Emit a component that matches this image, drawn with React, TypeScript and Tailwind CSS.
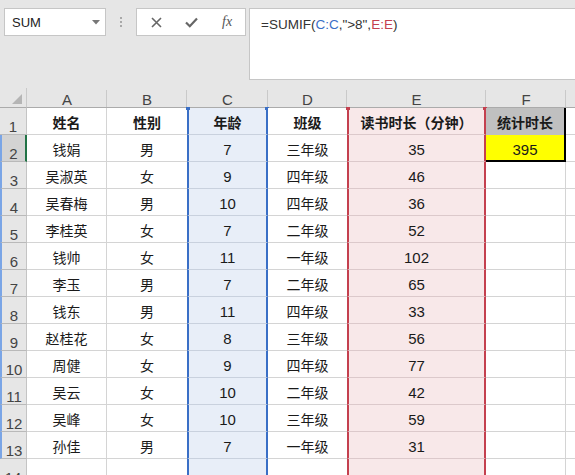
import React from "react";

type Row = [string, string, string, string, string];

const data: Row[] = [
  ["钱娟", "男", "7", "三年级", "35"],
  ["吴淑英", "女", "9", "四年级", "46"],
  ["吴春梅", "男", "10", "四年级", "36"],
  ["李桂英", "女", "7", "二年级", "52"],
  ["钱帅", "女", "11", "一年级", "102"],
  ["李玉", "男", "7", "二年级", "65"],
  ["钱东", "男", "11", "四年级", "33"],
  ["赵桂花", "女", "8", "三年级", "56"],
  ["周健", "女", "9", "四年级", "77"],
  ["吴云", "女", "10", "二年级", "42"],
  ["吴峰", "女", "10", "三年级", "59"],
  ["孙佳", "男", "7", "一年级", "31"],
];

const font = "font-['Liberation_Sans','Noto_Sans_CJK_SC',sans-serif]";

function RowHeader({ n }: { n: number }) {
  const sel = n === 2;
  const blue = n >= 2 && n <= 13;
  return (
    <div
      className={`flex items-end justify-center border-b border-b-[#b9b9b9] text-[15px] leading-none text-[#444] ${
        sel
          ? "bg-[#d3d3d3] border-r-2 border-r-[#217346]"
          : "bg-[#e6e6e6] border-r border-r-[#c4c4c4]"
      } ${blue ? "border-l-2 border-l-[#7aa5e6]" : ""}`}
    >
      <span className="mb-0">{n}</span>
    </div>
  );
}

function Cell({
  children,
  kind,
  bold,
  num,
}: {
  children?: React.ReactNode;
  kind: "n" | "c" | "e" | "f1" | "f2" | "g" | "b";
  bold?: boolean;
  num?: boolean;
}) {
  let cls = "";
  switch (kind) {
    case "n":
      cls = "bg-white border-r border-b border-[#d4d4d4]";
      break;
    case "b":
      cls = "bg-white border-b border-[#d4d4d4]";
      break;
    case "c":
      cls =
        "bg-[#e8eef8] border-l-2 border-r-2 border-l-[#3a6fc6] border-r-[#3a6fc6] border-b border-b-[#c9d1de]";
      break;
    case "e":
      cls =
        "bg-[#f8e8e9] border-l-2 border-r-2 border-l-[#c4404f] border-r-[#c4404f] border-b border-b-[#dcc9cb]";
      break;
    case "f1":
      cls = "bg-[#c0c0c0] border-r-2 border-r-black";
      break;
    case "f2":
      cls = "bg-[#ffff00] border-r-2 border-b-2 border-black";
      break;
    case "g":
      cls = "bg-white border-b border-[#d4d4d4]";
      break;
  }
  return (
    <div
      className={`relative flex items-center justify-center pt-[3px] leading-none text-[#1a1a1a] ${
        num ? "text-[15px]" : "text-[14px]"
      } ${bold ? "font-bold" : ""} ${cls}`}
    >
      {children}
    </div>
  );
}

function ColHeader({ label, last }: { label: string; last?: boolean }) {
  return (
    <div className="flex items-center justify-center bg-[#e6e6e6] border-b border-b-[#ababab] relative text-[15px] leading-none text-[#444]">
      <span className="mt-[4px]">{label}</span>
      {!last && (
        <div className="absolute right-0 top-[2px] bottom-0 w-px bg-[#c9c9c9]" />
      )}
    </div>
  );
}

export default function App() {
  return (
    <div className={`w-[575px] h-[475px] overflow-hidden bg-white ${font}`}>
      {/* formula bar */}
      <div className="h-[88px] bg-[#e6e6e6] flex items-start pt-2">
        <div className="ml-1 w-[102px] h-[28px] bg-white border border-[#c6c6c6] flex items-center justify-between pl-[7px] pr-[5px]">
          <span className="text-[13px] text-[#222] leading-none">SUM</span>
          <svg width="8" height="5" viewBox="0 0 8 5">
            <polygon points="0,0 8,0 4,4.5" fill="#777" />
          </svg>
        </div>
        <div className="w-[30px] h-[28px] flex flex-col items-center justify-center gap-[2px]">
          <div className="w-[2px] h-[2px] bg-[#a8a8a8]" />
          <div className="w-[2px] h-[2px] bg-[#a8a8a8]" />
          <div className="w-[2px] h-[2px] bg-[#a8a8a8]" />
        </div>
        <div className="w-[110px] h-[28px] bg-white border border-[#c6c6c6] flex items-center">
          <div className="w-[37px] flex justify-center pl-[2px]">
            <svg width="11" height="11" viewBox="0 0 11 11">
              <path d="M1 1 L10 10 M10 1 L1 10" stroke="#666" strokeWidth="1.6" />
            </svg>
          </div>
          <div className="w-[36px] flex justify-center">
            <svg width="13" height="11" viewBox="0 0 13 11">
              <path d="M1 5.5 L4.8 9.2 L12 1.5" stroke="#666" strokeWidth="2.2" fill="none" />
            </svg>
          </div>
          <div className="w-[36px] flex justify-center">
            <span className="font-['Liberation_Serif',serif] italic text-[14px] text-[#555] leading-none">
              fx
            </span>
          </div>
        </div>
        <div className="ml-[3px] flex-1 h-[72px] bg-white border border-r-0 border-[#c6c6c6] pl-[11px] pt-[7px] leading-none">
          <span className="text-[13.5px] leading-none text-[#333] whitespace-nowrap">
            =SUMIF(<span className="text-[#3a6fc6]">C:C</span>,"&gt;8",
            <span className="text-[#c4404f]">E:E</span>)
          </span>
        </div>
      </div>

      {/* grid */}
      <div className="grid grid-cols-[27px_80px_80px_81px_79px_139px_80px_9px] grid-rows-[20px_repeat(14,27px)]">
        {/* header row */}
        <div className="relative bg-[#e6e6e6] border-b border-b-[#ababab] border-r border-r-[#c9c9c9]">
          <svg className="absolute right-[4px] bottom-[3px]" width="10" height="10" viewBox="0 0 10 10">
            <polygon points="10,0 10,10 0,10" fill="#b5b5b5" />
          </svg>
        </div>
        <ColHeader label="A" />
        <ColHeader label="B" />
        <ColHeader label="C" />
        <ColHeader label="D" />
        <ColHeader label="E" />
        <ColHeader label="F" />
        <ColHeader label="" last />

        {/* row 1 */}
        <RowHeader n={1} />
        <Cell kind="n" bold>姓名</Cell>
        <Cell kind="b" bold>性别</Cell>
        <Cell kind="c" bold>
          <div className="absolute left-[-3px] top-[-1px] w-[4px] h-[3px] bg-[#3a6fc6]" />
          <div className="absolute right-[-3px] top-[-1px] w-[4px] h-[3px] bg-[#3a6fc6]" />
          年龄
        </Cell>
        <Cell kind="b" bold>班级</Cell>
        <Cell kind="e" bold>
          <div className="absolute left-[-3px] top-[-1px] w-[4px] h-[3px] bg-[#c4404f]" />
          <div className="absolute right-[-3px] top-[-1px] w-[4px] h-[3px] bg-[#c4404f]" />
          读书时长（分钟）
        </Cell>
        <Cell kind="f1" bold>统计时长</Cell>
        <Cell kind="g" />

        {data.map((r, i) => {
          const n = i + 2;
          return (
            <React.Fragment key={n}>
              <RowHeader n={n} />
              <Cell kind="n">{r[0]}</Cell>
              <Cell kind="b">{r[1]}</Cell>
              <Cell kind="c" num>{r[2]}</Cell>
              <Cell kind="b">{r[3]}</Cell>
              <Cell kind="e" num>{r[4]}</Cell>
              {n === 2 ? (
                <Cell kind="f2" num>395</Cell>
              ) : (
                <Cell kind="n" />
              )}
              <Cell kind="g" />
            </React.Fragment>
          );
        })}

        {/* row 14 */}
        <RowHeader n={14} />
        <Cell kind="n" />
        <Cell kind="b" />
        <Cell kind="c" />
        <Cell kind="b" />
        <Cell kind="e" />
        <Cell kind="n" />
        <Cell kind="g" />
      </div>
    </div>
  );
}
